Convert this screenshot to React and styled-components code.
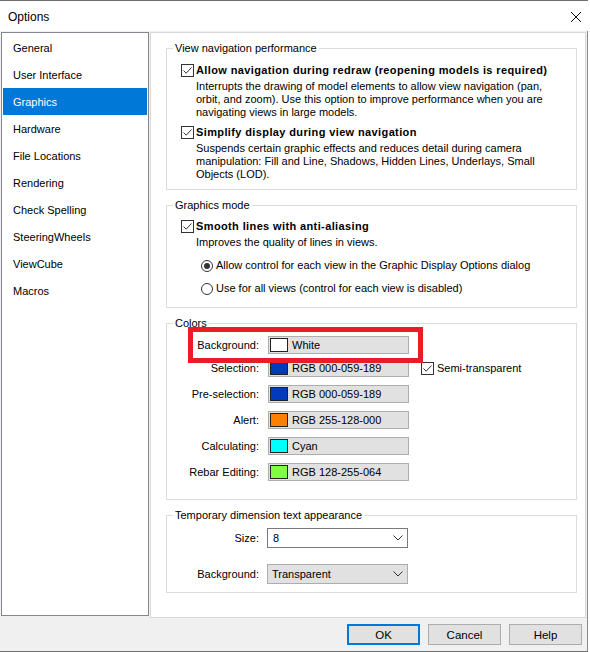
import React from 'react';
import styled, { createGlobalStyle } from 'styled-components';

const GlobalStyle = createGlobalStyle`
  html, body {
    margin: 0;
    padding: 0;
    background: #ffffff;
  }
  body {
    font-family: "Liberation Sans", Arial, sans-serif;
    font-size: 11px;
    color: #000;
  }
`;

const Window = styled.div`
  width: 588px;
  height: 652px;
  box-sizing: border-box;
  display: flex;
  flex-direction: column;
  background: #f0f0f0;
  border-top: 1px solid #6e6e6e;
  border-bottom: 1px solid #6e6e6e;
  border-right: 1px solid #8a8a8a;
`;

const TitleBar = styled.div`
  height: 30px;
  flex: none;
  background: #fff;
  display: flex;
  align-items: center;
  justify-content: space-between;
  padding: 1px 8px 0 8px;
  box-sizing: border-box;
  margin-right: -3px;
  font-size: 12px;
`;

const CloseIcon = () => (
  <svg width="12" height="12" viewBox="0 0 12 12">
    <path d="M1 1 L11 11 M11 1 L1 11" stroke="#111" strokeWidth="1" fill="none" />
  </svg>
);

const Main = styled.div`
  display: flex;
  align-items: flex-start;
  gap: 1px;
  padding: 1px 1px 0 1px;
`;

const NavList = styled.ul`
  list-style: none;
  margin: 0;
  padding: 1px;
  width: 148px;
  height: 584px;
  box-sizing: border-box;
  background: #fff;
  border: 1px solid #828790;
`;

const NavItem = styled.li`
  height: 27px;
  box-sizing: border-box;
  padding: 1px 0 0 10px;
  line-height: 26px;
  background: ${p => (p.$active ? '#0078d7' : 'transparent')};
  color: ${p => (p.$active ? '#fff' : '#000')};
`;

const Panel = styled.div`
  flex: 1;
  height: 586px;
  box-sizing: border-box;
  background: #fff;
  border: 1px solid #dadada;
  display: flex;
  flex-direction: column;
  gap: 9px;
  padding: 9px 8px 0 15px;
`;

const Group = styled.fieldset`
  margin: 0;
  padding: 0;
  border: 1px solid #dcdcdc;
  min-inline-size: 0;
`;

const Legend = styled.legend`
  margin-left: 6px;
  padding: 0 2px;
  line-height: 13px;
  font-size: 11px;
`;

const GroupBody = styled.div`
  display: flex;
  flex-direction: column;
  gap: ${p => p.$gap || 0}px;
  padding: ${p => p.$pad};
`;

const Option = styled.div`
  display: flex;
  flex-direction: column;
`;

const CheckRow = styled.label`
  display: flex;
  align-items: center;
  gap: 2px;
  height: 13px;
  line-height: 13px;
  font-weight: ${p => (p.$bold ? 700 : 400)};
  letter-spacing: ${p => (p.$bold ? '0.38px' : 'normal')};
`;

const Box = styled.span`
  width: 13px;
  height: 13px;
  box-sizing: border-box;
  border: 1px solid #333;
  background: #fff;
  display: inline-flex;
  flex: none;
`;

const Check = () => (
  <Box>
    <svg width="11" height="11" viewBox="0 0 11 11">
      <path d="M1.5 5.5 L4.2 8.2 L9.5 2.5" stroke="#333" strokeWidth="1" fill="none" />
    </svg>
  </Box>
);

const Desc = styled.div`
  margin-top: 3px;
  padding-left: 15px;
  line-height: 13px;
  padding-right: 4px;
`;

const RadioGroup = styled.div`
  margin-top: 10px;
  padding-left: 20px;
  display: flex;
  flex-direction: column;
  gap: 10px;
`;

const RadioRow = styled.label`
  display: flex;
  align-items: center;
  gap: 3px;
  height: 13px;
  line-height: 13px;
`;

const RadioCircle = styled.span`
  width: 12px;
  height: 12px;
  box-sizing: border-box;
  border: 1px solid #333;
  border-radius: 50%;
  background: #fff;
  display: inline-flex;
  align-items: center;
  justify-content: center;
  flex: none;
  &::after {
    content: '';
    width: 6px;
    height: 6px;
    border-radius: 50%;
    background: ${p => (p.$on ? '#333' : 'transparent')};
  }
`;

const ColorRow = styled.div`
  position: relative;
  display: grid;
  grid-template-columns: 92px 141px auto;
  column-gap: 9px;
  align-items: center;
  height: 18px;
  margin-top: ${p => p.$mt}px;
`;

const FieldLabel = styled.span`
  text-align: right;
  line-height: 13px;
`;

const ColorField = styled.div`
  height: 18px;
  box-sizing: border-box;
  background: #e1e1e1;
  border: 1px solid #adadad;
  display: flex;
  align-items: center;
  gap: 4px;
  padding-left: 1px;
`;

const Swatch = styled.span`
  width: 18px;
  height: 14px;
  box-sizing: border-box;
  border: 1px solid #222;
  background: ${p => p.$color};
  flex: none;
`;

const SideCheck = styled(CheckRow)`
  margin-left: 3px;
  gap: 3px;
`;

const Highlight = styled.div`
  position: absolute;
  left: 21px;
  top: -9px;
  width: 235px;
  height: 36px;
  box-sizing: border-box;
  border: 5px solid #ec1c24;
  pointer-events: none;
  z-index: 2;
`;

const SelectRow = styled.div`
  display: grid;
  grid-template-columns: 92px 141px;
  column-gap: 8px;
  align-items: center;
  height: 20px;
`;

const Select = styled.div`
  height: 20px;
  box-sizing: border-box;
  display: flex;
  align-items: center;
  justify-content: space-between;
  padding: 0 4px 0 ${p => (p.$plain ? 5 : 4)}px;
  background: ${p => (p.$plain ? '#fff' : '#e1e1e1')};
  border: 1px solid ${p => (p.$plain ? '#7a7a7a' : '#adadad')};
  line-height: 13px;
`;

const Chevron = () => (
  <svg width="10" height="6" viewBox="0 0 10 6">
    <path d="M0.5 0.5 L5 5 L9.5 0.5" stroke="#333" strokeWidth="1" fill="none" />
  </svg>
);

const Footer = styled.div`
  flex: 1;
  display: flex;
  justify-content: flex-end;
  align-items: flex-start;
  gap: 8px;
  padding: 6px 5px 0 0;
`;

const Button = styled.button`
  width: 73px;
  height: 21px;
  box-sizing: border-box;
  background: #e1e1e1;
  border: ${p => (p.$primary ? '2px solid #0078d7' : '1px solid #adadad')};
  font-family: "Liberation Sans", Arial, sans-serif;
  font-size: 11.5px;
  color: #000;
  padding: 0;
`;

const navItems = [
  'General',
  'User Interface',
  'Graphics',
  'Hardware',
  'File Locations',
  'Rendering',
  'Check Spelling',
  'SteeringWheels',
  'ViewCube',
  'Macros',
];

const colors = [
  { label: 'Background:', color: '#ffffff', text: 'White', mt: 0 },
  { label: 'Selection:', color: '#003bbd', text: 'RGB 000-059-189', mt: 5, semi: true },
  { label: 'Pre-selection:', color: '#003bbd', text: 'RGB 000-059-189', mt: 8 },
  { label: 'Alert:', color: '#ff8000', text: 'RGB 255-128-000', mt: 8 },
  { label: 'Calculating:', color: '#00ffff', text: 'Cyan', mt: 8 },
  { label: 'Rebar Editing:', color: '#80ff40', text: 'RGB 128-255-064', mt: 8 },
];

export default function App() {
  return (
    <>
      <GlobalStyle />
      <Window>
        <TitleBar>
          <span>Options</span>
          <CloseIcon />
        </TitleBar>
        <Main>
          <NavList>
            {navItems.map(name => (
              <NavItem key={name} $active={name === 'Graphics'}>
                {name}
              </NavItem>
            ))}
          </NavList>
          <Panel>
            <Group>
              <Legend>View navigation performance</Legend>
              <GroupBody $pad="9px 0 8px 14px" $gap={7}>
                <Option>
                  <CheckRow $bold>
                    <Check />
                    Allow navigation during redraw (reopening models is required)
                  </CheckRow>
                  <Desc>
                    Interrupts the drawing of model elements to allow view navigation (pan,
                    <br />
                    orbit, and zoom). Use this option to improve performance when you are
                    <br />
                    navigating views in large models.
                  </Desc>
                </Option>
                <Option>
                  <CheckRow $bold>
                    <Check />
                    Simplify display during view navigation
                  </CheckRow>
                  <Desc>
                    Suspends certain graphic effects and reduces detail during camera
                    <br />
                    manipulation: Fill and Line, Shadows, Hidden Lines, Underlays, Small
                    <br />
                    Objects (LOD).
                  </Desc>
                </Option>
              </GroupBody>
            </Group>

            <Group>
              <Legend>Graphics mode</Legend>
              <GroupBody $pad="8px 0 12px 14px">
                <Option>
                  <CheckRow $bold>
                    <Check />
                    Smooth lines with anti-aliasing
                  </CheckRow>
                  <Desc>Improves the quality of lines in views.</Desc>
                </Option>
                <RadioGroup>
                  <RadioRow>
                    <RadioCircle $on />
                    Allow control for each view in the Graphic Display Options dialog
                  </RadioRow>
                  <RadioRow>
                    <RadioCircle />
                    Use for all views (control for each view is disabled)
                  </RadioRow>
                </RadioGroup>
              </GroupBody>
            </Group>

            <Group>
              <Legend>Colors</Legend>
              <GroupBody $pad="6px 0 18px 0">
                {colors.map((c, i) => (
                  <ColorRow key={c.label} $mt={c.mt}>
                    <FieldLabel>{c.label}</FieldLabel>
                    <ColorField>
                      <Swatch $color={c.color} />
                      {c.text}
                    </ColorField>
                    {c.semi && (
                      <SideCheck>
                        <Check />
                        Semi-transparent
                      </SideCheck>
                    )}
                    {i === 0 && <Highlight />}
                  </ColorRow>
                ))}
              </GroupBody>
            </Group>

            <Group>
              <Legend>Temporary dimension text appearance</Legend>
              <GroupBody $pad="6px 0 8px 0" $gap={16}>
                <SelectRow>
                  <FieldLabel>Size:</FieldLabel>
                  <Select $plain>
                    8
                    <Chevron />
                  </Select>
                </SelectRow>
                <SelectRow>
                  <FieldLabel>Background:</FieldLabel>
                  <Select>
                    Transparent
                    <Chevron />
                  </Select>
                </SelectRow>
              </GroupBody>
            </Group>
          </Panel>
        </Main>
        <Footer>
          <Button $primary>OK</Button>
          <Button>Cancel</Button>
          <Button>Help</Button>
        </Footer>
      </Window>
    </>
  );
}
